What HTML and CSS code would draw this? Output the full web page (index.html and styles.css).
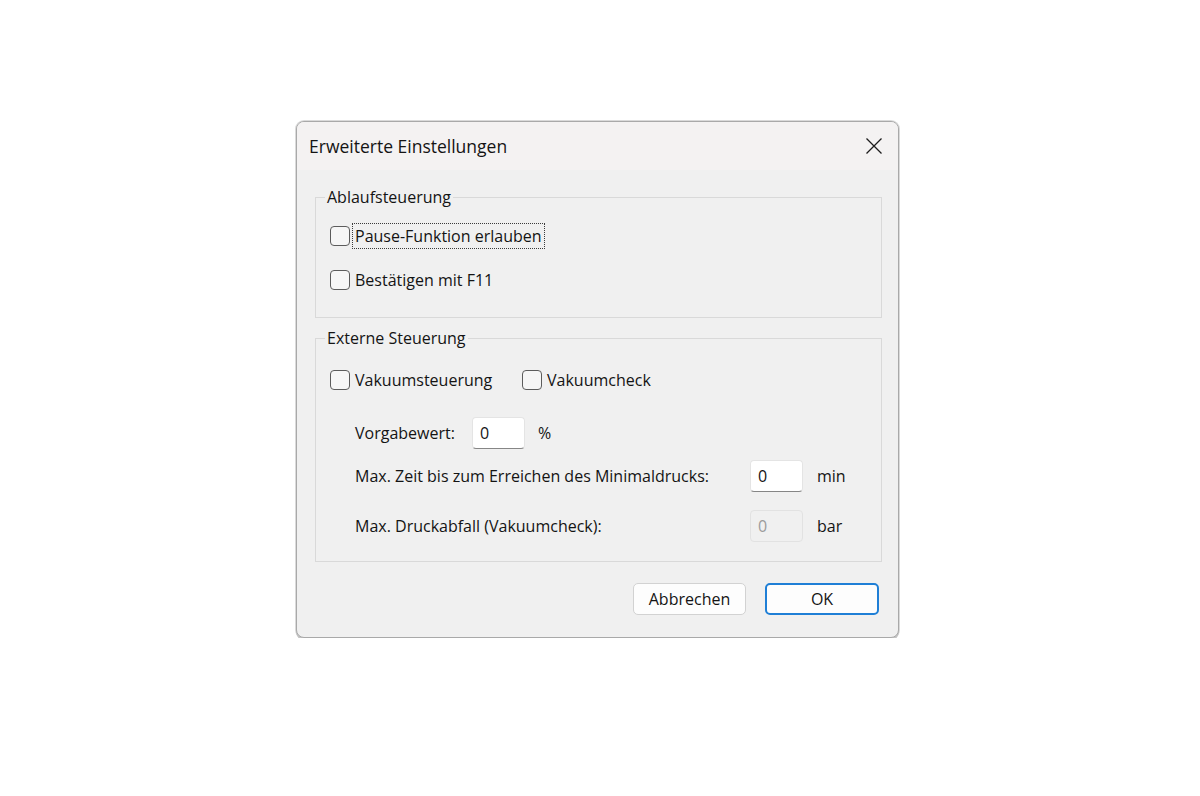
FILE: index.html
```html
<!DOCTYPE html>
<html lang="de">
<head>
<meta charset="utf-8">
<title>Erweiterte Einstellungen</title>
<link rel="stylesheet" href="styles.css">
</head>
<body>
<div class="stage">
  <div class="dialog">
    <div class="titlebar">
      <span class="title">Erweiterte Einstellungen</span>
      <span class="close">
        <svg width="18" height="18" viewBox="0 0 18 18"><path d="M1.5 1.5 L16.5 16.5 M16.5 1.5 L1.5 16.5" stroke="#1c1c1c" stroke-width="1.3" fill="none"/></svg>
      </span>
    </div>
    <div class="content">
      <fieldset class="group g1">
        <legend>Ablaufsteuerung</legend>
        <div class="check-row">
          <span class="box"></span><span class="lbl focus">Pause-Funktion erlauben</span>
        </div>
        <div class="check-row second">
          <span class="box"></span><span class="lbl">Bestätigen mit F11</span>
        </div>
      </fieldset>
      <fieldset class="group g2">
        <legend>Externe Steuerung</legend>
        <div class="check-line">
          <div class="check-row wide"><span class="box"></span><span class="lbl">Vakuumsteuerung</span></div>
          <div class="check-row"><span class="box"></span><span class="lbl">Vakuumcheck</span></div>
        </div>
        <div class="field-row r1">
          <span class="flabel">Vorgabewert:</span>
          <span class="input">0</span>
          <span class="unit">%</span>
        </div>
        <div class="field-row r2">
          <span class="flabel fixed">Max. Zeit bis zum Erreichen des Minimaldrucks:</span>
          <span class="input">0</span>
          <span class="unit">min</span>
        </div>
        <div class="field-row r3">
          <span class="flabel fixed">Max. Druckabfall (Vakuumcheck):</span>
          <span class="input disabled">0</span>
          <span class="unit">bar</span>
        </div>
      </fieldset>
      <div class="buttons">
        <span class="btn">Abbrechen</span>
        <span class="btn primary">OK</span>
      </div>
    </div>
  </div>
</div>
</body>
</html>
```
FILE: styles.css
```css
* { box-sizing: border-box; }
html, body { margin: 0; padding: 0; background: #ffffff; }
body {
  font-family: "Open Sans", "Noto Sans", "Liberation Sans", sans-serif;
  font-size: 16px;
  color: #141414;
}
.stage {
  padding: 121px 0 0 296px;
}
.dialog {
  width: 603px;
  background: #f0f0f0;
  border: 1px solid #a9a9a9;
  border-radius: 8px;
  box-shadow: 0 2px 0 #c4c4c4, 0 0 0 1px #dadada;
  overflow: hidden;
}
.titlebar {
  height: 48px;
  background: #f4f2f2;
  display: flex;
  align-items: center;
  justify-content: space-between;
  padding: 0 15px 0 12px;
}
.title { font-size: 17.5px; line-height: 22px; }
.close { display: flex; width: 18px; height: 18px; }
.content {
  padding: 17px 16px 22px 18px;
}
.group {
  margin: 0;
  border: 1px solid #d9d9d9;
  border-radius: 0;
  padding: 17px 14px 25px 14px;
  min-width: 0;
}
.group legend {
  padding: 0 2px;
  margin-left: -5px;
  line-height: 20px;
}
.g2 {
  margin-top: 10px;
  padding: 20px 14px 19px 14px;
}
.check-row {
  display: flex;
  align-items: center;
  height: 24px;
}
.check-row.second { margin-top: 20px; }
.check-line { display: flex; }
.check-row.wide { width: 192px; }
.box {
  width: 20px;
  height: 20px;
  border: 1.5px solid #5c5c5c;
  border-radius: 4px;
  background: #f6f6f6;
  flex: none;
}
.lbl {
  margin-left: 3px;
  padding: 0 2px;
  line-height: 24px;
}
.lbl.focus { outline: 1px dotted #3a3a3a; outline-offset: 0; }
.field-row {
  display: flex;
  align-items: center;
  height: 32px;
  padding-left: 25px;
}
.r1 { margin-top: 25px; }
.r2 { margin-top: 11px; }
.r3 { margin-top: 18px; }
.flabel { line-height: 20px; }
.flabel.fixed { width: 395px; flex: none; }
.r1 .input { margin-left: 17px; }
.input {
  width: 53px;
  height: 32px;
  background: #ffffff;
  border: 1px solid #e4e4e4;
  border-bottom: 1px solid #868686;
  border-radius: 4px;
  padding-left: 7px;
  line-height: 30px;
  flex: none;
}
.input.disabled {
  background: #f0f0f0;
  border: 1px solid #e2e2e2;
  color: #9c9c9c;
}
.unit { margin-left: 14px; }
.r1 .unit { margin-left: 13px; }
.buttons {
  display: flex;
  justify-content: flex-end;
  gap: 19px;
  margin-top: 21px;
  padding-right: 3px;
}
.btn {
  width: 113px;
  height: 32px;
  display: flex;
  align-items: center;
  justify-content: center;
  background: #fdfdfd;
  border: 1px solid #d2d2d2;
  border-radius: 5px;
}
.btn.primary {
  width: 114px;
  border: 2px solid #1f7fd6;
}
```
